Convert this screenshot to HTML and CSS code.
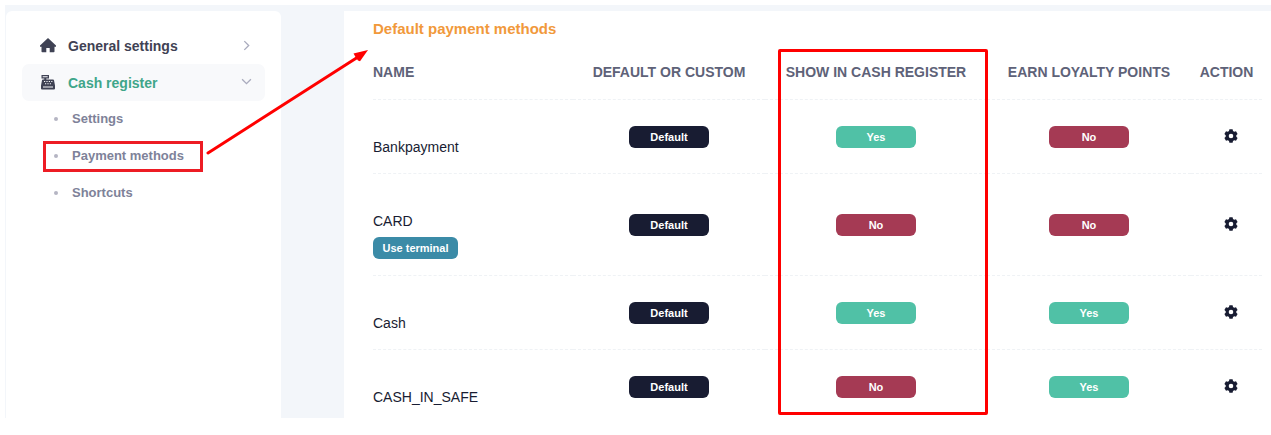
FILE: index.html
```html
<!DOCTYPE html>
<html lang="en">

<head>
    <meta charset="UTF-8">
    <meta name="viewport" content="width=device-width, initial-scale=1.0">
    <title>Payment methods</title>
    <link rel="stylesheet" href="styles.css">
</head>

<body>

    <!-- shared icons -->
    <svg class="sprite" aria-hidden="true">
        <symbol id="gear" viewBox="0 0 14 14">
            <path fill-rule="evenodd" d="M5.4 0.3h3.2l.4 1.7 1.200.7 1.800-.5 1.600 2.700-1.300 1.300v1.600l1.300 1.300-1.600 2.700-1.800-.5-1.200.7-.4 1.700H5.4L5 12l-1.200-.7-1.800.5L.4 9.100l1.300-1.300V6.200L.4 4.900 2 2.200l1.800.5L5 2zM7 4.700a2.300 2.300 0 1 0 0 4.600 2.300 2.300 0 0 0 0-4.600z"/>
        </symbol>
    </svg>

    <div class="page">
        <nav class="sidebar">
            <a href="#" class="menu-link">
                <svg class="menu-icon" viewBox="0 0 16 16">
                    <path d="M8 0L16 7.500v1.300h-1.500V13.500a.8.8 0 0 1-.8.8H9.700V10H6.300v4.300H2.300a.8.8 0 0 1-.8-.8V8.800H0V7.500z"/>
                </svg>
                <span class="menu-title">General settings</span>
                <svg class="chevron" viewBox="0 0 10 10"><path d="M3 1l4 4-4 4"/></svg>
            </a>
            <a href="#" class="menu-link active">
                <svg class="menu-icon" viewBox="0 0 16 16">
                    <path fill-rule="evenodd" d="M1.500 0h7.500v3.500H6.300V4.500H13a1 1 0 0 1 1 .8l1 5.200v3a1 1 0 0 1-1 1H2a1 1 0 0 1-1-1v-3l1-5.200a1 1 0 0 1 1-.8h1.300V3.500H1.500zM2.700 1.200v1h5v-1zM4 6v1h1.200V6zM6.400 6v1h1.200V6zM8.800 6v1H10V6zM11.200 6v1h1.200V6zM5 8.200v1h1.200v-1zM7.400 8.200v1h1.200v-1zM9.800 8.200v1H11v-1zM3 11.500v1h10v-1z"/>
                </svg>
                <span class="menu-title">Cash register</span>
                <svg class="chevron" viewBox="0 0 10 10"><path d="M1 2l4 4 4-4"/></svg>
            </a>
            <ul class="submenu">
                <li><a href="#">Settings</a></li>
                <li class="marked"><a href="#">Payment methods</a></li>
                <li><a href="#">Shortcuts</a></li>
            </ul>
        </nav>

        <main class="panel">
            <h1>Default payment methods</h1>
            <table>
                <colgroup>
                    <col>
                    <col class="col-type">
                    <col class="col-show">
                    <col class="col-points">
                    <col class="col-action">
                </colgroup>
                <thead>
                    <tr>
                        <th>Name</th>
                        <th>Default or custom</th>
                        <th class="show-head">Show in cash register<span class="column-mark"></span></th>
                        <th>Earn loyalty points</th>
                        <th>Action</th>
                    </tr>
                </thead>
                <tbody>
                    <tr>
                        <td>Bankpayment</td>
                        <td><span class="badge dark">Default</span></td>
                        <td><span class="badge yes">Yes</span></td>
                        <td><span class="badge no">No</span></td>
                        <td><button aria-label="Edit Bankpayment"><svg><use href="#gear"/></svg></button></td>
                    </tr>
                    <tr>
                        <td>CARD <span class="badge terminal">Use terminal</span></td>
                        <td><span class="badge dark">Default</span></td>
                        <td><span class="badge no">No</span></td>
                        <td><span class="badge no">No</span></td>
                        <td><button aria-label="Edit CARD"><svg><use href="#gear"/></svg></button></td>
                    </tr>
                    <tr>
                        <td>Cash</td>
                        <td><span class="badge dark">Default</span></td>
                        <td><span class="badge yes">Yes</span></td>
                        <td><span class="badge yes">Yes</span></td>
                        <td><button aria-label="Edit Cash"><svg><use href="#gear"/></svg></button></td>
                    </tr>
                    <tr>
                        <td>CASH_IN_SAFE</td>
                        <td><span class="badge dark">Default</span></td>
                        <td><span class="badge no">No</span></td>
                        <td><span class="badge yes">Yes</span></td>
                        <td><button aria-label="Edit CASH_IN_SAFE"><svg><use href="#gear"/></svg></button></td>
                    </tr>
                </tbody>
            </table>
        </main>

        <!-- arrow from the menu item to the table title -->
        <svg class="arrow" viewBox="0 0 170 116" aria-hidden="true">
            <path class="arrow-line" d="M8 110L158 14"/>
            <path class="arrow-head" d="M168 7l-14.500 3.500 2 3.500 2.500 3.500 2 .8z"/>
        </svg>
    </div>

</body>

</html>
```

FILE: styles.css
```css
*,
*::before,
*::after {
    box-sizing: border-box;
}

body {
    margin: 0;
    background-color: #fff;
    font-family: "Liberation Sans", Arial, sans-serif;
    font-size: 14px;
    color: #181c32;
}

a {
    color: inherit;
    text-decoration: none;
}

.sprite {
    display: none;
}

.page {
    position: relative;
    display: flex;
    align-items: stretch;
    gap: 63px;
    height: calc(100vh - 22px);
    margin: 5px 0 17px 5px;
    padding: 6px 0 0 1px;
    background-color: #f3f6fa;
    overflow: hidden;
}

/* sidebar */
.sidebar {
    flex: 0 0 275px;
    padding: 16px;
    background-color: #fff;
    border-radius: 6px 6px 0 0;
}

.menu-link {
    display: flex;
    align-items: center;
    height: 37px;
    padding: 0 13px 0 18px;
    border-radius: 7px;
    font-size: 14px;
    font-weight: bold;
    color: #3f4254;
}

.menu-link.active {
    background-color: #f8f9fb;
    color: #3fa68a;
}

.menu-icon {
    width: 16px;
    height: 16px;
    margin-right: 12px;
    fill: #3f4254;
}

.menu-title {
    flex: 1;
}

.chevron {
    width: 11px;
    height: 11px;
    fill: none;
    stroke: #a9abbd;
    stroke-width: 1.2;
}

.submenu {
    margin: 0;
    padding: 0;
    list-style: none;
}

.submenu li {
    position: relative;
    height: 37px;
    padding-left: 32px;
}

.submenu a {
    display: flex;
    align-items: center;
    gap: 14px;
    height: 35px;
    font-size: 13px;
    font-weight: bold;
    color: #7e8299;
}

.submenu a::before {
    content: "";
    width: 4px;
    height: 4px;
    border-radius: 50%;
    background-color: #b5b5c3;
}

.marked::after {
    content: "";
    position: absolute;
    top: 3px;
    left: 21px;
    width: 160px;
    height: 31px;
    border: 3px solid #ed1c24;
    pointer-events: none;
}

/* payment methods */
.panel {
    flex: 1;
    padding: 8px 9px 0 29px;
    background-color: #fff;
}

h1 {
    margin: 0;
    font-size: 15px;
    line-height: 20px;
    color: #f1993b;
}

table {
    width: 100%;
    table-layout: fixed;
    border-collapse: separate;
    border-spacing: 0;
}

.col-type {
    width: 192px;
}

.col-show {
    width: 222px;
}

.col-points {
    width: 204px;
}

.col-action {
    width: 71px;
}

th,
td {
    padding: 0;
    border-bottom: 1px dashed #eff2f5;
    text-align: center;
}

th {
    height: 61px;
    padding-top: 6px;
    color: #5e6278;
    text-transform: uppercase;
    white-space: nowrap;
}

th:first-child,
td:first-child {
    text-align: left;
}

td:first-child {
    padding: 37px 0 16px;
    line-height: 20px;
}

tbody tr:last-child td {
    border-bottom: none;
}

.show-head {
    position: relative;
}

.column-mark {
    position: absolute;
    top: 10px;
    left: 13px;
    right: -1px;
    height: 366px;
    border: 3px solid #f00;
    border-radius: 2px;
    pointer-events: none;
}

.badge {
    display: block;
    width: 80px;
    height: 22px;
    margin: 0 auto;
    border-radius: 6px;
    font-size: 11px;
    font-weight: bold;
    line-height: 22px;
    text-align: center;
    color: #fff;
}

.dark {
    background-color: #181c32;
}

.yes {
    background-color: #50c1a6;
}

.no {
    background-color: #a53a54;
}

.terminal {
    width: 85px;
    margin: 6px 0 0;
    background-color: #3b8ba7;
}

td button {
    display: block;
    margin: 0 auto;
    padding: 0 0 2px 8px;
    border: none;
    background: none;
    cursor: pointer;
}

td button svg {
    display: block;
    width: 14px;
    height: 14px;
    fill: #181c32;
}

.arrow {
    position: absolute;
    top: 38px;
    left: 195px;
    width: 170px;
    height: 116px;
    pointer-events: none;
}

.arrow-line {
    stroke: #f00;
    stroke-width: 3;
    stroke-linecap: round;
}

.arrow-head {
    fill: #f00;
}
```
